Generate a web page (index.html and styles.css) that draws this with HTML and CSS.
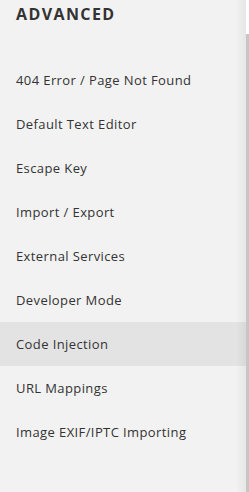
FILE: index.html
```html
<!DOCTYPE html>
<html lang="en">
<head>
    <meta charset="UTF-8">
    <meta name="viewport" content="width=device-width, initial-scale=1.0">
    <title>Advanced</title>
    <link rel="stylesheet" href="styles.css">
</head>
<body>
    <div class="panel">
        <div class="panel-title">ADVANCED</div>
        <ul class="menu">
            <li class="menu-item">404 Error / Page Not Found</li>
            <li class="menu-item">Default Text Editor</li>
            <li class="menu-item">Escape Key</li>
            <li class="menu-item">Import / Export</li>
            <li class="menu-item">External Services</li>
            <li class="menu-item">Developer Mode</li>
            <li class="menu-item active">Code Injection</li>
            <li class="menu-item">URL Mappings</li>
            <li class="menu-item">Image EXIF/IPTC Importing</li>
        </ul>
    </div>
    <div class="backdrop">
        <div class="backdrop-top"></div>
        <div class="backdrop-body"></div>
    </div>
</body>
</html>
```

FILE: styles.css
```css
body {
    margin: 0;
    padding: 0;
    display: flex;
    height: 100vh;
    font-family: "Open Sans", "Liberation Sans", sans-serif;
    color: #333;
    background: #fff;
}
.panel {
    width: 246px;
    flex-shrink: 0;
    background: #f2f2f2;
    position: relative;
}
.panel::after {
    content: "";
    position: absolute;
    top: 0;
    right: 0;
    width: 10px;
    height: 100%;
    background: linear-gradient(to right, rgba(0, 0, 0, 0), rgba(0, 0, 0, 0.05));
}
.panel-title {
    padding: 3px 16px 0;
    height: 34px;
    font-size: 16px;
    font-weight: 700;
    letter-spacing: 1.4px;
    color: #333;
    box-sizing: border-box;
}
.menu {
    list-style: none;
    margin: 0;
    padding: 24px 0 0;
}
.menu-item {
    height: 44px;
    line-height: 44px;
    padding-left: 16px;
    font-size: 13px;
    letter-spacing: 0.4px;
    color: #333;
}
.menu-item.active {
    background: #e3e3e3;
}
.backdrop {
    flex-grow: 1;
    display: flex;
    flex-direction: column;
}
.backdrop-top {
    height: 34px;
    background: #fff;
}
.backdrop-body {
    flex-grow: 1;
    background: #c6c6c6;
}
```
